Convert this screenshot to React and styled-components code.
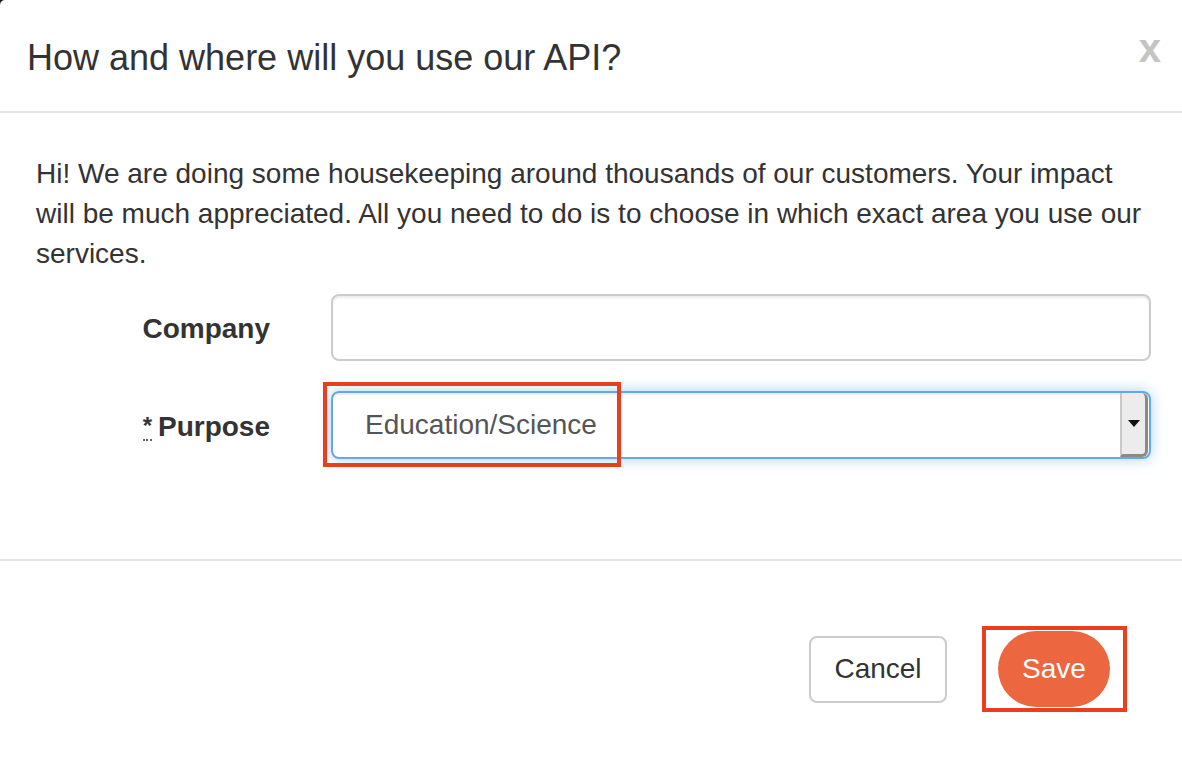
import React from "react";
import styled, { createGlobalStyle } from "styled-components";

const Global = createGlobalStyle`
  html, body {
    margin: 0;
    padding: 0;
    background: #1a1a1a;
  }
  body {
    font-family: "Liberation Sans", Arial, sans-serif;
    color: #333;
  }
`;

const Modal = styled.div`
  width: 1182px;
  height: 776px;
  background: #fff;
  border-top-left-radius: 5px;
  display: flex;
  flex-direction: column;
`;

const Header = styled.div`
  position: relative;
  padding: 32px 30px 28px;
  border-bottom: 2px solid #e5e5e5;
`;

const Title = styled.h4`
  margin: 0 0 0 -3px;
  font-size: 36px;
  font-weight: 400;
  line-height: 51px;
  color: #333;
`;

const Close = styled.button`
  position: absolute;
  top: 23px;
  right: 21px;
  border: 0;
  background: none;
  padding: 0;
  font-family: "Liberation Sans", Arial, sans-serif;
  font-size: 40px;
  font-weight: 700;
  line-height: 51px;
  color: #c4c4c4;
  cursor: pointer;
`;

const Body = styled.div`
  padding: 41px 31px 100px 36px;
  border-bottom: 2px solid #e5e5e5;
`;

const Intro = styled.p`
  margin: 0 0 20px;
  font-size: 28px;
  line-height: 40px;
  color: #333;
`;

const Row = styled.div`
  display: grid;
  grid-template-columns: 234px 1fr;
  column-gap: 61px;
  align-items: center;
  margin-bottom: ${(p) => p.$gap || 0}px;
`;

const Label = styled.label`
  text-align: right;
  font-size: 28px;
  font-weight: 700;
  color: #333;
  padding-top: 3px;
`;

const Req = styled.abbr`
  font-weight: 700;
  font-size: 24px;
  text-decoration: none;
  border-bottom: 2px dotted #666;
  margin-right: 6px;
  vertical-align: 2px;
`;

const TextInput = styled.input`
  box-sizing: border-box;
  width: 100%;
  height: 67px;
  border: 2px solid #ccc;
  border-radius: 8px;
  box-shadow: inset 0 2px 2px rgba(0, 0, 0, 0.075);
  font-family: inherit;
  font-size: 28px;
  padding: 0 24px;
  outline: none;
`;

const SelectBox = styled.div`
  position: relative;
  box-sizing: border-box;
  height: 68px;
  border: 2px solid #66a6e9;
  border-radius: 8px;
  box-shadow: inset 0 2px 2px rgba(0, 0, 0, 0.075),
    0 0 14px rgba(102, 175, 233, 0.55);
  display: flex;
  align-items: center;
  font-size: 28px;
  color: #555;
  padding-left: 32px;
`;

const Arrow = styled.span`
  position: absolute;
  right: 1px;
  top: 0;
  bottom: 0;
  width: 28px;
  box-sizing: border-box;
  background: #ececec;
  border-left: 2px solid #c9c9c9;
  border-right: 3px solid #8a8a8a;
  border-bottom: 3px solid #8a8a8a;
  border-radius: 0 6px 6px 0;
  display: flex;
  align-items: center;
  justify-content: center;
  &::after {
    content: "";
    border-left: 6px solid transparent;
    border-right: 6px solid transparent;
    border-top: 7px solid #111;
  }
`;

const Mark = styled.span`
  position: absolute;
  border: 4px solid #ea3f1e;
  pointer-events: none;
`;

const Footer = styled.div`
  flex: 1;
  display: flex;
  justify-content: flex-end;
  align-items: center;
  gap: 51px;
  padding: 0 72px 0 0;
  margin-top: 1px;
`;

const Cancel = styled.button`
  box-sizing: border-box;
  width: 138px;
  height: 67px;
  border: 2px solid #ccc;
  border-radius: 8px;
  background: #fff;
  color: #333;
  font-family: inherit;
  font-size: 28px;
`;

const SaveWrap = styled.div`
  position: relative;
`;

const Save = styled.button`
  width: 112px;
  height: 76px;
  border: 0;
  border-radius: 38px;
  background: #ec6640;
  color: #fff;
  font-family: inherit;
  font-size: 28px;
`;

export default function App() {
  return (
    <>
      <Global />
      <Modal>
        <Header>
          <Title>How and where will you use our API?</Title>
          <Close>x</Close>
        </Header>
        <Body>
          <Intro>
            Hi! We are doing some housekeeping around thousands of our
            customers. Your impact will be much appreciated. All you need to do
            is to choose in which exact area you use our services.
          </Intro>
          <Row $gap={30}>
            <Label>Company</Label>
            <TextInput />
          </Row>
          <Row>
            <Label>
              <Req title="required">*</Req>Purpose
            </Label>
            <SelectBox>
              Education/Science
              <Arrow />
              <Mark style={{ left: -10, top: -11, width: 290, height: 77 }} />
            </SelectBox>
          </Row>
        </Body>
        <Footer>
          <Cancel>Cancel</Cancel>
          <SaveWrap>
            <Save>Save</Save>
            <Mark style={{ left: -16, top: -5, width: 137, height: 78 }} />
          </SaveWrap>
        </Footer>
      </Modal>
    </>
  );
}
